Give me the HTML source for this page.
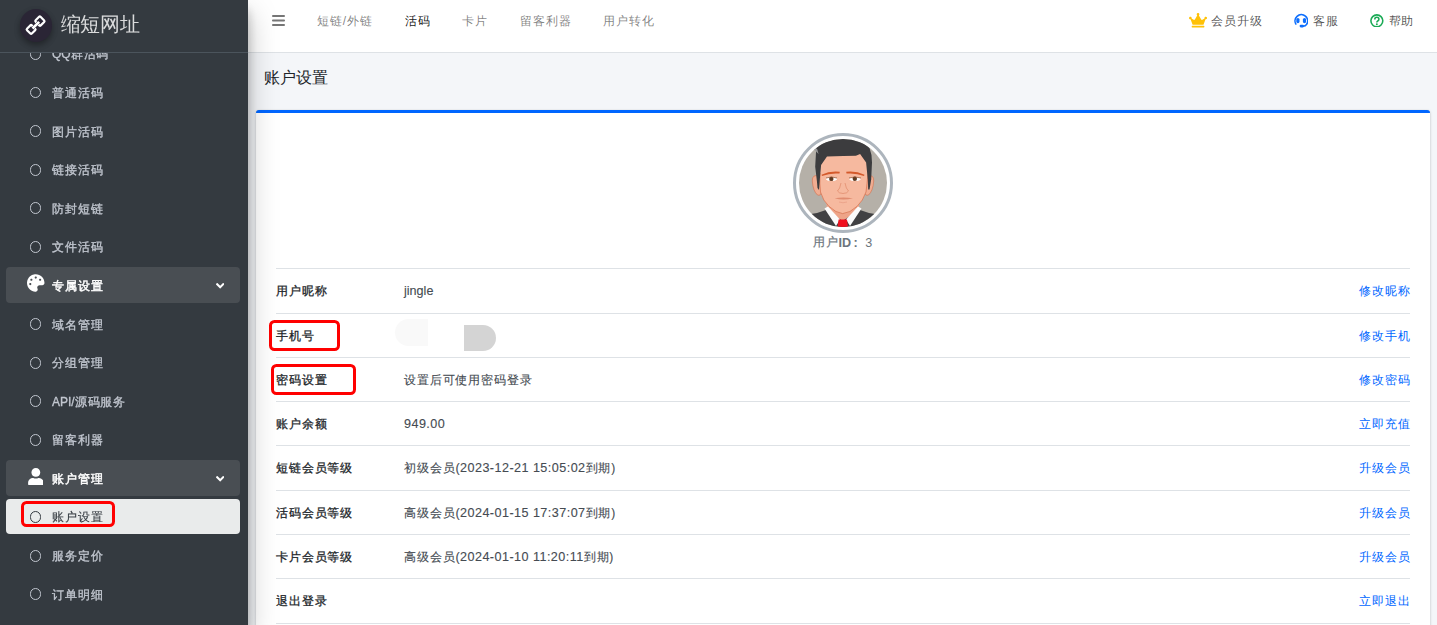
<!DOCTYPE html>
<html><head><meta charset="utf-8">
<style>
*{box-sizing:border-box;margin:0;padding:0}
html,body{width:1437px;height:625px;overflow:hidden}
body{background:#f4f6f9;font-family:"Liberation Sans",sans-serif;font-size:12px;letter-spacing:0.85px;color:#212529;position:relative}
.abs{position:absolute}
#nav{position:absolute;left:248px;top:0;width:1189px;height:53px;background:#fff;border-bottom:1px solid #dee2e6}
#side{position:absolute;left:0;top:0;width:248px;height:625px;background:#343a40;will-change:transform;box-shadow:0 14px 28px rgba(0,0,0,.25),0 10px 10px rgba(0,0,0,.22);z-index:5}
#brand{position:absolute;left:0;top:0;width:248px;height:53px;background:#343a40;border-bottom:1px solid #4b545c;z-index:3}
.item{position:absolute;left:6px;width:234px;height:36px;border-radius:4px}
.item .txt{position:absolute;left:46px;top:1px;line-height:36px;font-size:12px;color:#c2c7d0;white-space:nowrap;-webkit-text-stroke:0.32px currentColor}
.item .circ{position:absolute;left:23.7px;top:12.7px;width:11.7px;height:11.7px;border:1.55px solid #c2c7d0;border-radius:50%}
.item.hdr{background:#494e53}
.item.hdr .txt{color:#fff;-webkit-text-stroke:0.45px #fff}
.item.act{background:#e9ebeb;height:35px}
.item.act .txt{color:#343a40;-webkit-text-stroke:0.12px #343a40;top:0.3px}
.item.act .circ{border-color:#343a40;border-width:1.3px}
.ntxt{position:absolute;top:0px;line-height:42px;font-size:12px;color:rgba(0,0,0,.5);white-space:nowrap}
#title{position:absolute;left:264px;top:64px;font-size:16.2px;letter-spacing:0;line-height:26px;color:#212529}
#card{position:absolute;left:256px;top:110px;width:1174px;height:600px;background:#fff;border-top:3px solid #0066ff;border-radius:3px;box-shadow:0 0 1px rgba(0,0,0,.125),0 1px 3px rgba(0,0,0,.2)}
.row{position:absolute;left:276px;width:1134px;height:44.35px;border-top:1px solid #dee2e6}
.row .l{position:absolute;left:0;top:0;line-height:44.5px;-webkit-text-stroke:0.28px #212529;color:#212529;white-space:nowrap}
.row .v{position:absolute;left:128px;top:0;line-height:44.5px;color:#454b52;-webkit-text-stroke:0.12px #454b52;white-space:nowrap}
.row .a{position:absolute;right:-0.85px;top:0;line-height:44.5px;color:#0066ff;white-space:nowrap}
.lat{font-size:12.6px;letter-spacing:0.45px}
.latj{font-size:12.6px;letter-spacing:0}
.red{position:absolute;border:3.2px solid #ff0000;border-radius:5.5px}
</style></head><body>
<div id="nav">
<svg class="abs" style="left:24px;top:15px" width="13" height="11" viewBox="0 0 13 11"><rect x="0" y="0" width="13" height="2" fill="#767676" rx="0.9"/><rect x="0" y="4.5" width="13" height="2" fill="#767676" rx="0.9"/><rect x="0" y="9" width="13" height="2" fill="#767676" rx="0.9"/></svg>
<div class="ntxt" style="left:69px">短链/外链</div>
<div class="ntxt" style="left:157px;color:rgba(0,0,0,.9)">活码</div>
<div class="ntxt" style="left:214px">卡片</div>
<div class="ntxt" style="left:272px">留客利器</div>
<div class="ntxt" style="left:355px">用户转化</div>
<svg class="abs" style="left:940.8px;top:13.2px" width="18.1" height="14.5" viewBox="0 0 640 512"><path fill="#ffc107" d="M528 448H112c-8.8 0-16 7.2-16 16v32c0 8.8 7.2 16 16 16h416c8.8 0 16-7.2 16-16v-32c0-8.8-7.2-16-16-16zm64-320c-26.5 0-48 21.5-48 48 0 7.1 1.6 13.7 4.4 19.8L476 239.2c-15.4 9.2-35.3 4-44.2-11.6L350.3 85C361 76.2 368 63 368 48c0-26.5-21.5-48-48-48s-48 21.5-48 48c0 15 7 28.2 17.7 37l-81.5 142.6c-8.9 15.6-28.9 20.8-44.2 11.6l-72.3-43.4c2.7-6 4.4-12.7 4.4-19.8 0-26.5-21.5-48-48-48S0 149.5 0 176s21.5 48 48 48c2.6 0 5.2-.4 7.7-.8L128 416h384l72.3-192.8c2.5.4 5.1.8 7.7.8 26.5 0 48-21.5 48-48s-21.5-48-48-48z"/></svg>
<div class="ntxt" style="left:963px;color:rgba(0,0,0,.68)">会员升级</div>
<svg class="abs" style="left:1046px;top:13.3px" width="14.4" height="14.4" viewBox="0 0 14.4 14.4"><path d="M2.2 11.6 A6.3 6.3 0 1 1 12.6 11.4 Q11.4 13.4 8.6 13.2" fill="none" stroke="#0d6efd" stroke-width="1.6"/><rect x="2.3" y="4.9" width="3.2" height="5.3" rx="1.6" fill="#0d6efd"/><rect x="8.9" y="4.9" width="3.2" height="5.3" rx="1.6" fill="#0d6efd"/><rect x="5.6" y="11.8" width="4.4" height="2.6" rx="1.3" fill="#0d6efd"/></svg>
<div class="ntxt" style="left:1065px;color:rgba(0,0,0,.68)">客服</div>
<svg class="abs" style="left:1122.2px;top:13.8px" width="13.7" height="13.7" viewBox="0 0 14 14"><circle cx="7" cy="7" r="6.1" fill="none" stroke="#1aaa55" stroke-width="1.6"/><path d="M4.9 5.5 Q4.9 3.4 7 3.4 Q9.1 3.4 9.1 5.3 Q9.1 6.5 7.9 7.1 Q7 7.6 7 8.6" fill="none" stroke="#1aaa55" stroke-width="1.6"/><circle cx="7" cy="10.5" r="1" fill="#1aaa55"/></svg>
<div class="ntxt" style="left:1140.5px;color:rgba(0,0,0,.68)">帮助</div>
</div>
<div id="side">
<div id="brand">
<div class="abs" style="left:19.6px;top:9.2px;width:32.4px;height:32.4px;border-radius:50%;background:#2a2535;box-shadow:0 3px 6px rgba(0,0,0,.16),0 3px 6px rgba(0,0,0,.23)"></div>
<svg class="abs" style="left:22px;top:12px" width="28" height="28" viewBox="0 0 28 28"><g transform="translate(13.7 13.6) rotate(-45)"><rect x="-9.4" y="-3.9" width="6.8" height="6.8" rx="1" fill="none" stroke="#fff" stroke-width="2.2"/><rect x="2.7" y="-3.8" width="6.9" height="7.2" rx="1" fill="none" stroke="#fff" stroke-width="2.2"/><rect x="-4.3" y="-1.5" width="9.4" height="2.6" fill="#fff" stroke="#2a2535" stroke-width="0.9" paint-order="stroke"/></g></svg>
<div class="abs" style="left:60.5px;top:8.7px;font-size:19.6px;letter-spacing:-0.15px;line-height:30px;color:rgba(255,255,255,.82)">缩短网址</div>
</div>
<div class="item" style="top:35.40px"><div class="circ"></div><div class="txt"><span style="letter-spacing:0">QQ</span>群活码</div></div>
<div class="item" style="top:74.00px"><div class="circ"></div><div class="txt">普通活码</div></div>
<div class="item" style="top:112.60px"><div class="circ"></div><div class="txt">图片活码</div></div>
<div class="item" style="top:151.20px"><div class="circ"></div><div class="txt">链接活码</div></div>
<div class="item" style="top:189.80px"><div class="circ"></div><div class="txt">防封短链</div></div>
<div class="item" style="top:228.40px"><div class="circ"></div><div class="txt">文件活码</div></div>
<div class="item hdr" style="top:267.00px"><svg class="abs" style="left:21px;top:7px" width="17.5" height="18" viewBox="0 0 512 512"><path fill="#fff" fill-rule="evenodd" d="M204.3 5C104.9 24.4 24.8 104.3 5.2 203.4c-37 187 131.7 326.4 258.8 306.7 41.2-6.4 61.4-54.6 42.5-91.7-23.1-45.4 9.9-98.4 60.9-98.4h79.7c35.8 0 64.8-29.6 64.9-65.3C511.5 97.1 368.1-26.9 204.3 5zM96 320c-17.7 0-32-14.3-32-32s14.3-32 32-32 32 14.3 32 32-14.3 32-32 32zm32-128c-17.7 0-32-14.3-32-32s14.3-32 32-32 32 14.3 32 32-14.3 32-32 32zm128-64c-17.7 0-32-14.3-32-32s14.3-32 32-32 32 14.3 32 32-14.3 32-32 32zm128 64c-17.7 0-32-14.3-32-32s14.3-32 32-32 32 14.3 32 32-14.3 32-32 32z"/></svg><div class="txt">专属设置</div><svg class="abs" style="left:209.9px;top:11.5px" width="8.4" height="13.4" viewBox="0 0 320 512"><path fill="#fff" d="M143 352.3L7 216.3c-9.4-9.4-9.4-24.6 0-33.9l22.6-22.6c9.4-9.4 24.6-9.4 33.9 0l96.4 96.4 96.4-96.4c9.4-9.4 24.6-9.4 33.9 0l22.6 22.6c9.4 9.4 9.4 24.6 0 33.9l-136 136c-9.2 9.4-24.4 9.4-33.8 0z"/></svg></div>
<div class="item" style="top:305.60px"><div class="circ"></div><div class="txt">域名管理</div></div>
<div class="item" style="top:344.20px"><div class="circ"></div><div class="txt">分组管理</div></div>
<div class="item" style="top:382.80px"><div class="circ"></div><div class="txt"><span style="letter-spacing:0">API/</span>源码服务</div></div>
<div class="item" style="top:421.40px"><div class="circ"></div><div class="txt">留客利器</div></div>
<div class="item hdr" style="top:460.00px"><svg class="abs" style="left:21.8px;top:7.6px" width="15.7" height="17.7" viewBox="0 0 448 512"><path fill="#fff" d="M224 256c70.7 0 128-57.3 128-128S294.7 0 224 0 96 57.3 96 128s57.3 128 128 128zm89.6 32h-16.7c-22.2 10.2-46.9 16-72.9 16s-50.6-5.8-72.9-16h-16.7C60.2 288 0 348.2 0 422.4V464c0 26.5 21.5 48 48 48h352c26.5 0 48-21.5 48-48v-41.6c0-74.2-60.2-134.4-134.4-134.4z"/></svg><div class="txt">账户管理</div><svg class="abs" style="left:209.9px;top:11.5px" width="8.4" height="13.4" viewBox="0 0 320 512"><path fill="#fff" d="M143 352.3L7 216.3c-9.4-9.4-9.4-24.6 0-33.9l22.6-22.6c9.4-9.4 24.6-9.4 33.9 0l96.4 96.4 96.4-96.4c9.4-9.4 24.6-9.4 33.9 0l22.6 22.6c9.4 9.4 9.4 24.6 0 33.9l-136 136c-9.2 9.4-24.4 9.4-33.8 0z"/></svg></div>
<div class="item act" style="top:498.60px"><div class="circ"></div><div class="txt">账户设置</div></div>
<div class="item" style="top:537.20px"><div class="circ"></div><div class="txt">服务定价</div></div>
<div class="item" style="top:575.80px"><div class="circ"></div><div class="txt">订单明细</div></div>
</div>
<div id="title">账户设置</div>
<div id="card"></div>
<div class="abs" style="left:793px;top:133px;width:100px;height:100px;border-radius:50%;border:3px solid #adb5bd;background:#fff"></div>
<svg class="abs" style="left:799px;top:139px" width="88" height="88" viewBox="6 6 88 88">
<defs><clipPath id="cc"><circle cx="50" cy="50" r="44"/></clipPath></defs>
<g clip-path="url(#cc)">
<rect x="0" y="0" width="100" height="100" fill="#b5b0a8"/>
<path d="M6 100 L10 86 Q14 81 24 80 L36 76 L50 86 L64 76 L76 80 Q86 81 90 86 L94 100 Z" fill="#414143"/>
<path d="M33.6 70 L33.6 77 L49.6 88 L66 77 L66 70 Z" fill="#eea488"/>
<path d="M31.5 75.5 L35 73.5 L47 86.5 L43 93 Z" fill="#fbfbfb"/>
<path d="M68.5 75.5 L65 73.5 L53 86.5 L57 93 Z" fill="#fbfbfb"/>
<path d="M45.6 86.5 L54 86.5 L55 94 L44.6 94 Z" fill="#f0101e"/>
<path d="M26 43 Q19 41 19.3 48 Q20 58 24.5 62 Q28 63.5 28.5 58 Z" fill="#f0ad92" stroke="#d46e4c" stroke-width="0.6"/>
<path d="M74 43 Q81 41 80.7 48 Q80 58 75.5 62 Q72 63.5 71.5 58 Z" fill="#f0ad92" stroke="#d46e4c" stroke-width="0.6"/>
<path d="M27 40 Q26.5 52 27.5 59 Q30 68 36 73.4 Q43 80 49.6 80.6 Q57 80 64 73.4 Q70 68 73 59 Q74 52 75 40 L75 18 L26 18 L26 40 Z" fill="#f6b99f" stroke="#d46e4c" stroke-width="0.7"/>
<path d="M23 15 Q30 8 37.4 7.4 Q44 6 50.2 6.1 Q58 6 64.6 7.4 Q72 10 76.5 15 Q79 21 79 29.4 L78.2 46.4 L76.5 56.6 L75.2 56.6 L74.8 46.4 L73.1 29.4 L67.1 21 L62.9 22.7 L50.2 23.1 L34 23.5 L28.1 32 L26.8 46.4 L26 57 L24.5 55 L23.9 48 L22.2 33.7 L23 19.3 Z" fill="#3c3c3e"/>
<path d="M20.5 16 L25.6 21 L24 15.5 Z" fill="#9a9a9a"/>
<path d="M28.5 41.8 Q37 37.6 46.8 38.8 L46.5 40.6 Q37 39.8 29 43 Z" fill="#d45a2c"/>
<path d="M71.5 41.8 Q63 37.6 53.2 38.8 L53.5 40.6 Q63 39.8 71 43 Z" fill="#d45a2c"/>
<ellipse cx="38.5" cy="46" rx="5.6" ry="2.1" fill="#fff"/>
<ellipse cx="62" cy="46" rx="5.8" ry="2.1" fill="#fff"/>
<circle cx="38.3" cy="45.9" r="2.2" fill="#5e3a22"/>
<circle cx="61.8" cy="45.8" r="2.2" fill="#5e3a22"/>
<path d="M33 45 Q38.5 43 44 45" fill="none" stroke="#8a4a2a" stroke-width="0.7"/>
<path d="M56 45 Q62 43 68 45" fill="none" stroke="#8a4a2a" stroke-width="0.7"/>
<path d="M48 50 Q47 56 44.5 58 Q46 60.5 50 60.5 Q54 60.5 55.5 58 Q53 56 52 50" fill="none" stroke="#e08a6a" stroke-width="0.7"/>
<path d="M41.6 65.2 Q50 63.6 60 65.2 Q50 67.6 41.6 65.2 Z" fill="#e08c70"/><path d="M46 69 Q50 70.5 54 69" fill="none" stroke="#eaa086" stroke-width="0.8"/>
</g></svg>
<div class="abs" style="left:813px;top:234.2px;font-size:12px;line-height:17px;color:#6c757d;white-space:nowrap;-webkit-text-stroke:0.2px #6c757d">用户</div>
<div class="abs" style="left:838.6px;top:235px;font-size:12.6px;line-height:17px;color:#6c757d;font-weight:700;letter-spacing:0;white-space:nowrap">ID</div>
<div class="abs" style="left:853.6px;top:235px;font-size:12.6px;line-height:17px;color:#6c757d;font-weight:700;letter-spacing:0">:</div>
<div class="abs" style="left:865.2px;top:235px;font-size:12.6px;line-height:17px;color:#6c757d;letter-spacing:0">3</div>
<div class="red" style="left:268.5px;top:320.2px;width:71.3px;height:30.8px"></div>
<div class="red" style="left:271.2px;top:364.3px;width:84.5px;height:30.7px"></div>
<div class="red" style="left:20.9px;top:501px;width:93.8px;height:26px;z-index:9"></div>
<div class="abs" style="left:395.4px;top:319px;width:32.6px;height:27.2px;background:#f9f9f9;border-radius:13.6px 0 0 13.6px"></div>
<div class="abs" style="left:464px;top:324.9px;width:32.1px;height:26px;background:#d4d4d4;border-radius:0 13px 13px 0"></div>
<div class="row" style="top:268px;height:45px"><div class="l">用户昵称</div><div class="v"><span class="latj">jingle</span></div><div class="a">修改昵称</div></div>
<div class="row" style="top:313px;height:44px"><div class="l">手机号</div><div class="v"></div><div class="a">修改手机</div></div>
<div class="row" style="top:357px;height:44px"><div class="l">密码设置</div><div class="v">设置后可使用密码登录</div><div class="a">修改密码</div></div>
<div class="row" style="top:401px;height:44px"><div class="l">账户余额</div><div class="v"><span class="lat">949.00</span></div><div class="a">立即充值</div></div>
<div class="row" style="top:445px;height:44.5px"><div class="l">短链会员等级</div><div class="v">初级会员<span class="lat">(2023-12-21 15:05:02</span>到期)</div><div class="a">升级会员</div></div>
<div class="row" style="top:489.5px;height:44.5px"><div class="l">活码会员等级</div><div class="v">高级会员<span class="lat">(2024-01-15 17:37:07</span>到期)</div><div class="a">升级会员</div></div>
<div class="row" style="top:534px;height:44px"><div class="l">卡片会员等级</div><div class="v">高级会员<span class="lat">(2024-01-10 11:20:11</span>到期)</div><div class="a">升级会员</div></div>
<div class="row" style="top:578px;height:45px"><div class="l">退出登录</div><div class="v"></div><div class="a">立即退出</div></div>
<div class="row" style="top:623px;height:44px"><div class="l"></div><div class="v"></div><div class="a"></div></div>
</body></html>
